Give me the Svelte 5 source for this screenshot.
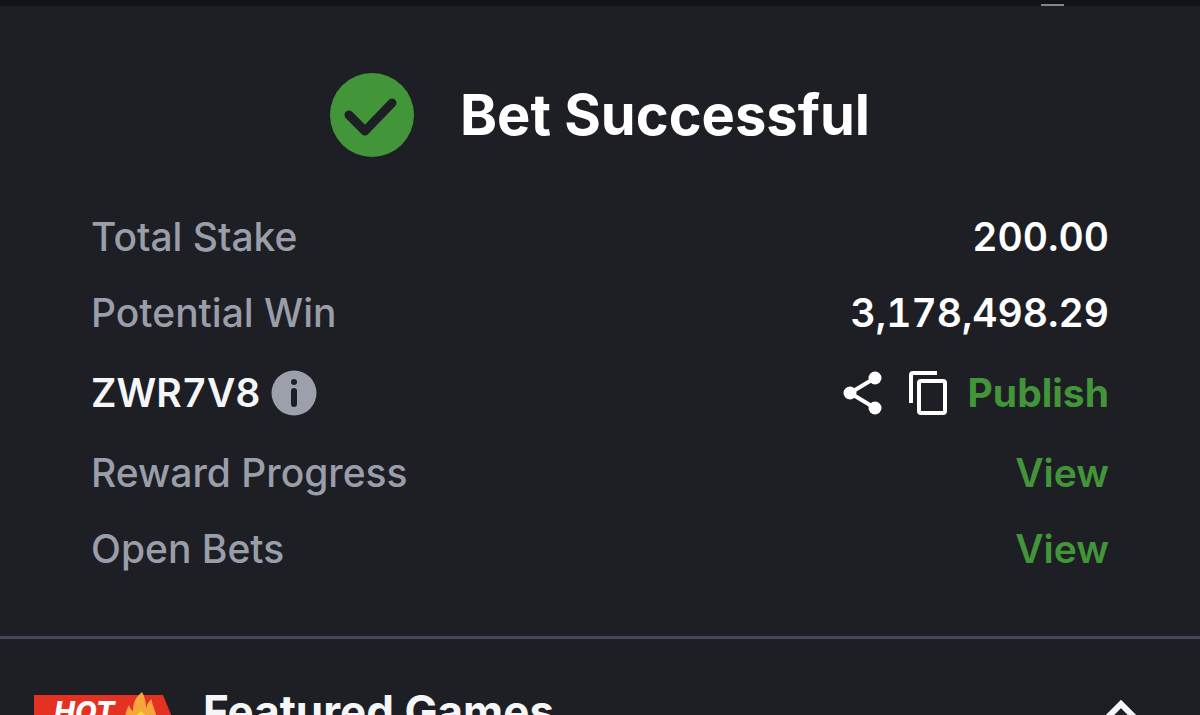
<script lang="ts">
	interface BetSlip {
		stake: number;
		potentialWin: number;
		code: string;
	}

	const bet: BetSlip = {
		stake: 200,
		potentialWin: 3178498.29,
		code: 'ZWR7V8',
	};

	const links = [
		{ label: 'Reward Progress', href: '#rewards' },
		{ label: 'Open Bets', href: '#open-bets' },
	];

	let featuredOpen = $state(true);

	function money(value: number) {
		return value.toLocaleString('en-US', { minimumFractionDigits: 2, maximumFractionDigits: 2 });
	}

	function copyCode() {
		navigator.clipboard?.writeText(bet.code);
	}

	function shareCode() {
		navigator.share?.({ text: bet.code });
	}
</script>

<main>
	<div class="top-edge"><span class="handle"></span></div>

	<section class="receipt">
		<header>
			<svg class="success" viewBox="0 0 84 84" aria-hidden="true">
				<circle cx="42" cy="42" r="42" fill="#439539" />
				<path d="M19 42l16 16 27-28" fill="none" stroke="#1e1f25" stroke-width="9" stroke-linecap="round" stroke-linejoin="round" />
			</svg>
			<h1>Bet Successful</h1>
		</header>

		<div class="rows">
			<div class="row">
				<span>Total Stake</span>
				<strong>{money(bet.stake)}</strong>
			</div>
			<div class="row">
				<span>Potential Win</span>
				<strong>{money(bet.potentialWin)}</strong>
			</div>
			<div class="row code-row">
				<div class="code">
					<strong>{bet.code}</strong>
					<button type="button" aria-label="About booking codes">
						<svg width="46" height="46" viewBox="0 0 46 46">
							<circle cx="23" cy="23" r="22.5" fill="#9ca0ab" />
							<circle cx="23" cy="12" r="3" fill="#1e1f25" />
							<path d="M23 21v13" stroke="#1e1f25" stroke-width="6" stroke-linecap="round" />
						</svg>
					</button>
				</div>
				<div class="actions">
					<button type="button" aria-label="Share" onclick={shareCode}>
						<svg width="40" height="44" viewBox="0 0 40 44">
							<path d="M33 7L8 22l25 15" fill="none" stroke="#fff" stroke-width="4" />
							<circle cx="33" cy="7" r="6.5" fill="#fff" />
							<circle cx="8" cy="22" r="6.5" fill="#fff" />
							<circle cx="33" cy="37" r="6.5" fill="#fff" />
						</svg>
					</button>
					<button type="button" aria-label="Copy code" onclick={copyCode}>
						<svg width="40" height="44" viewBox="0 0 40 44" fill="none" stroke="#fff" stroke-width="4">
							<path d="M3 32V4q0-2 2-2h24" />
							<rect x="11" y="10" width="26" height="32" rx="2" />
						</svg>
					</button>
					<button type="button" class="publish">Publish</button>
				</div>
			</div>
			{#each links as link}
				<div class="row">
					<span>{link.label}</span>
					<a href={link.href} aria-label={`View ${link.label}`}>View</a>
				</div>
			{/each}
		</div>
	</section>

	<section class="featured">
		<div class="hot">
			<span>HOT</span>
			<svg class="flame" viewBox="0 0 34 46" aria-hidden="true">
				<path d="M18 0c3 5 4 10 4 16 1-4 3-7 6-9-1 5 5 13 5 22 0 10-7 17-16 17S1 39 1 29c0-6 1-11 4-16 1 3 2 5 4 6 0-9 3-14 9-19z" fill="#f6a63a" />
				<path d="M17 19c5 4 9 9 9 15 0 6-4 10-9 10s-9-4-9-10c0-6 4-11 9-15z" fill="#fdd733" />
			</svg>
		</div>
		<h2>Featured Games</h2>
		<button
			type="button"
			class="toggle"
			aria-label="Toggle featured games"
			aria-expanded={featuredOpen}
			onclick={() => (featuredOpen = !featuredOpen)}
		>
			<svg class:closed={!featuredOpen} width="38" height="24" viewBox="0 0 38 24">
				<path d="M3 21L19 5l16 16" fill="none" stroke="#f5f6f8" stroke-width="6" />
			</svg>
		</button>
	</section>
</main>

<style>
	:global(body) {
		margin: 0;
		background: #1e1f25;
	}
	main {
		height: 100vh;
		overflow: hidden;
		color: #f5f6f8;
		font-family: Inter, "Liberation Sans", sans-serif;
	}
	.top-edge {
		display: flex;
		justify-content: flex-end;
		align-items: flex-end;
		height: 6px;
		padding-right: 136px;
		background: #121317;
	}
	.handle {
		width: 23px;
		height: 2px;
		background: #85868a;
	}
	.receipt {
		padding: 67px 91px 49px;
		border-bottom: 3px solid #434957;
	}
	header {
		display: flex;
		align-items: center;
		justify-content: center;
		gap: 46px;
	}
	.success {
		width: 84px;
		height: 84px;
	}
	h1 {
		margin: 0;
		color: #fff;
		font-size: 56px;
		font-weight: 700;
		line-height: 84px;
	}
	.rows {
		padding-top: 42px;
	}
	.row {
		display: flex;
		align-items: center;
		justify-content: space-between;
		min-height: 76px;
		font-size: 39px;
		line-height: 48px;
	}
	.row span {
		color: #9a9eaa;
		font-weight: 450;
	}
	.row strong {
		font-weight: 600;
		font-variant-numeric: tabular-nums;
	}
	.row > strong {
		color: #fff;
	}
	.code-row {
		min-height: 84px;
	}
	.code,
	.actions {
		display: flex;
		align-items: center;
	}
	.code {
		gap: 10px;
	}
	.actions {
		gap: 26px;
	}
	button {
		display: block;
		padding: 0;
		border: 0;
		background: none;
		color: inherit;
		font: inherit;
		cursor: pointer;
	}
	svg {
		display: block;
	}
	.row a,
	.row .publish {
		color: #439539;
		font-weight: 600;
		text-decoration: none;
	}
	.row .publish {
		margin-left: -6px;
		font-weight: 700;
	}
	.featured {
		display: flex;
		align-items: flex-start;
		padding: 46px 60px 32px 34px;
	}
	.hot {
		position: relative;
		width: 143px;
		margin-top: 10px;
	}
	.hot span {
		display: block;
		padding-left: 20px;
		background: #e43122;
		clip-path: polygon(0 0, 129px 0, 100% 100%, 0 100%);
		color: #fff;
		font-size: 28px;
		font-style: italic;
		font-weight: 800;
		line-height: 34px;
	}
	.flame {
		position: absolute;
		top: -3px;
		left: 90px;
		width: 34px;
		height: 46px;
	}
	h2 {
		margin: 0 auto 0 26px;
		font-size: 44px;
		font-weight: 700;
		line-height: 52px;
	}
	.toggle {
		margin-top: 14px;
	}
	.closed {
		transform: rotate(180deg);
	}
</style>
